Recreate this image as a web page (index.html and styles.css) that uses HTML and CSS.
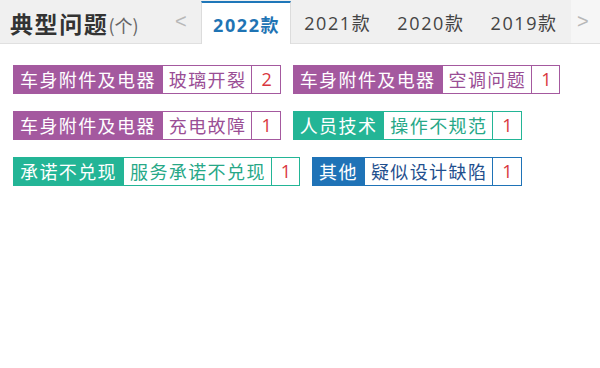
FILE: index.html
```html
<!DOCTYPE html>
<html lang="zh-CN">
<head>
<meta charset="utf-8">
<title>典型问题</title>
<link rel="stylesheet" href="styles.css">
</head>
<body>
<div class="panel">
  <div class="header">
    <div class="title"><span class="title-main">典型问题</span><span class="title-unit">(个)</span></div>
    <div class="arrow arrow-left">&lt;</div>
    <div class="tabs">
      <div class="tab active">2022款</div>
      <div class="tab">2021款</div>
      <div class="tab">2020款</div>
      <div class="tab">2019款</div>
    </div>
    <div class="arrow arrow-right">&gt;</div>
  </div>
  <div class="tags">
    <div class="tag purple"><span class="lbl">车身附件及电器</span><span class="val">玻璃开裂</span><span class="cnt">2</span></div>
    <div class="tag purple"><span class="lbl">车身附件及电器</span><span class="val">空调问题</span><span class="cnt">1</span></div>
    <div class="tag purple"><span class="lbl">车身附件及电器</span><span class="val">充电故障</span><span class="cnt">1</span></div>
    <div class="tag teal"><span class="lbl">人员技术</span><span class="val">操作不规范</span><span class="cnt">1</span></div>
    <div class="tag teal"><span class="lbl">承诺不兑现</span><span class="val">服务承诺不兑现</span><span class="cnt">1</span></div>
    <div class="tag blue"><span class="lbl">其他</span><span class="val">疑似设计缺陷</span><span class="cnt">1</span></div>
  </div>
</div>
</body>
</html>
```
FILE: styles.css
```css
* { box-sizing: border-box; }
html, body { margin: 0; padding: 0; background: #ffffff; }
body {
  font-family: "Open Sans", "Noto Sans CJK SC", sans-serif;
  width: 600px;
  height: 368px;
  overflow: hidden;
}
.panel { width: 600px; }
.header {
  display: flex;
  align-items: stretch;
  height: 44px;
  background: #f0f0f0;
  border-bottom: 1px solid #e0e0e0;
}
.title {
  display: flex;
  align-items: baseline;
  width: 168px;
  padding: 9px 0 0 10px;
  color: #333333;
  line-height: 28px;
}
.title-main {
  font-family: "Noto Sans CJK SC", sans-serif;
  font-size: 23px;
  font-weight: 700;
  letter-spacing: 1.6px;
}
.title-unit {
  font-family: "Noto Sans CJK SC", sans-serif;
  font-size: 18px;
  color: #666666;
}
.arrow {
  display: flex;
  align-items: center;
  font-family: "Liberation Sans", sans-serif;
  font-size: 20px;
  color: #b8b8b8;
}
.arrow-left { width: 33px; padding-left: 7px; }
.arrow-right {
  width: 29px;
  margin-left: auto;
  padding-left: 6px;
  background: #f6f6f6;
}
.tabs { display: flex; align-items: stretch; }
.tab {
  display: flex;
  align-items: center;
  padding: 0 13px;
  font-size: 18px;
  letter-spacing: 1.6px;
  color: #444444;
}
.tab.active {
  margin-top: 1px;
  margin-bottom: -1px;
  padding: 0 10px 0 11px;
  background: #ffffff;
  border-top: 2px solid #1f77b9;
  border-left: 1px solid #dcdcdc;
  border-right: 1px solid #dcdcdc;
  color: #1f74b4;
  font-weight: 700;
}
.tags {
  display: flex;
  flex-wrap: wrap;
  gap: 17px 12px;
  padding: 21px 13px 0 13px;
}
.tag {
  display: flex;
  height: 29px;
  border: 1px solid var(--c);
  font-family: "Noto Sans CJK SC", sans-serif;
  font-size: 18px;
  line-height: 27px;
  letter-spacing: 1.4px;
}
.tag span { display: block; white-space: nowrap; }
.lbl {
  padding: 0 7px 0 6px;
  background: var(--c);
  color: #ffffff;
}
.val {
  padding: 0 5px 0 6px;
  color: var(--t);
  border-right: 1px solid var(--c);
}
.cnt {
  padding: 0 8px 0 9px;
  color: #d9363e;
  font-family: "Open Sans", sans-serif;
  letter-spacing: 0;
}
.purple { --c: #a4599f; --t: #9a4e95; }
.teal { --c: #23b596; --t: #27a887; }
.blue { --c: #1f73b7; --t: #1f4f8e; }
```
